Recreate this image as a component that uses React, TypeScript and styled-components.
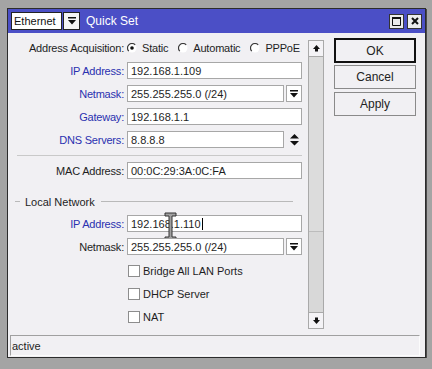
import * as React from 'react';
import styled, { createGlobalStyle, css } from 'styled-components';

const GlobalStyle = createGlobalStyle`
  html, body {
    margin: 0;
    padding: 0;
    background: #a4a4a4;
  }
  body {
    font-family: "Liberation Sans", Arial, sans-serif;
    font-size: 11px;
    color: #1e1e1e;
  }
`;

const Window = styled.div`
  box-sizing: border-box;
  width: 419px;
  height: 350px;
  margin: 8px 0 0 7px;
  border: 1px solid #2c2c2c;
  box-shadow: 1px 1px 0 #4a4a4a;
  background: #f1f0f3;
  display: flex;
  flex-direction: column;
`;

const TitleBar = styled.div`
  flex-shrink: 0;
  height: 24px;
  background: #4b4fc6;
  display: flex;
  align-items: center;
  padding: 0 3px 0 3px;
`;

const TitleSelect = styled.div`
  box-sizing: border-box;
  width: 51px;
  height: 18px;
  background: #fff;
  border: 1px solid #222;
  padding-left: 2px;
  line-height: 16px;
  color: #111;
`;

const TitleDrop = styled.div`
  box-sizing: border-box;
  width: 17px;
  height: 18px;
  margin-left: 1px;
  background: #f4f4f4;
  border: 1px solid #222;
  display: flex;
  align-items: center;
  justify-content: center;
`;

const TitleText = styled.div`
  margin-left: 6px;
  color: #fff;
  font-size: 12px;
  flex: 1;
`;

const WinButtons = styled.div`
  display: flex;
  gap: 3px;
`;

const WinButton = styled.div`
  box-sizing: border-box;
  width: 15px;
  height: 15px;
  background: #ececec;
  border: 1px solid #333;
  display: flex;
  align-items: center;
  justify-content: center;
`;

const Main = styled.div`
  display: flex;
  height: 300px;
  flex-shrink: 0;
`;

const LeftPane = styled.div`
  width: 300px;
  padding-top: 6px;
  box-sizing: border-box;
`;

const Form = styled.div`
  display: flex;
  flex-direction: column;
  gap: 6px;
`;

const Row = styled.div<{ $mt?: number }>`
  display: grid;
  grid-template-columns: 116px 175px;
  column-gap: 3px;
  align-items: center;
  height: 17px;
  margin-top: ${({ $mt }) => $mt ?? 0}px;
`;

const Label = styled.div<{ $blue?: boolean }>`
  text-align: right;
  white-space: nowrap;
  letter-spacing: -0.2px;
  color: ${({ $blue }) => ($blue ? '#2a31b0' : '#1e1e1e')};
`;

const Field = styled.div`
  display: flex;
  gap: 2px;
  height: 17px;
`;

const Input = styled.div`
  position: relative;
  box-sizing: border-box;
  flex: 1;
  height: 17px;
  border: 1px solid #a7a7a7;
  background: #fff;
  padding-left: 3px;
  display: flex;
  align-items: center;
  white-space: nowrap;
`;

const SideButton = styled.div<{ $plain?: boolean }>`
  box-sizing: border-box;
  width: 16px;
  height: 17px;
  display: flex;
  align-items: center;
  justify-content: center;
  ${({ $plain }) => !$plain && css`
    border: 1px solid #a7a7a7;
    background: #fff;
  `}
`;

const Caret = styled.span`
  display: inline-block;
  width: 1px;
  height: 12px;
  background: #000;
  margin-left: 1px;
`;

const IBeam = styled.svg`
  position: absolute;
  left: 36px;
  top: -4px;
`;

const Separator = styled.div`
  height: 1px;
  width: 285px;
  margin: 1px 0 0 9px;
  background: #c9c9c9;
`;

const GroupHeader = styled.div`
  display: flex;
  align-items: center;
  height: 15px;
  width: 285px;
  margin-top: 9px;
  &::before, &::after {
    content: '';
    height: 1px;
    background: #b9b9b9;
  }
  &::before {
    width: 5px;
    margin: 0 5px 0 7px;
  }
  &::after {
    flex: 1;
    margin-left: 6px;
  }
`;

const Radios = styled.div`
  display: flex;
  gap: 10px;
`;

const RadioItem = styled.div`
  display: flex;
  align-items: center;
  gap: 5px;
  white-space: nowrap;
  letter-spacing: -0.2px;
`;

const CheckItem = styled.div`
  display: flex;
  align-items: center;
  gap: 3px;
  padding-left: 1px;
`;

const CheckBox = styled.div`
  box-sizing: border-box;
  width: 12px;
  height: 12px;
  border: 1px solid #8d8d8d;
  background: #fff;
`;

const ScrollBar = styled.div`
  box-sizing: border-box;
  width: 16px;
  height: 289px;
  margin-top: 7px;
  border: 1px solid #a9a9a9;
  background: #d8d8d8;
  display: flex;
  flex-direction: column;
`;

const ScrollButton = styled.div<{ $down?: boolean }>`
  height: 15px;
  background: #f4f3f6;
  display: flex;
  align-items: center;
  justify-content: center;
  ${({ $down }) => ($down ? css`border-top: 1px solid #a9a9a9;` : css`border-bottom: 1px solid #a9a9a9;`)}
`;

const Thumb = styled.div`
  height: 174px;
  background: #dcdcdc;
  border-bottom: 1px solid #bcbcbc;
`;

const Track = styled.div`
  flex: 1;
`;

const ButtonColumn = styled.div`
  flex: 1;
  padding: 5px 9px 0 10px;
  display: flex;
  flex-direction: column;
  gap: 2px;
`;

const DialogButton = styled.div<{ $default?: boolean; $mt?: number }>`
  box-sizing: border-box;
  height: ${({ $default }) => ($default ? 25 : 24)}px;
  border: ${({ $default }) => ($default ? '2px solid #111' : '1px solid #8a8a8a')};
  background: #f1f0f3;
  display: flex;
  align-items: center;
  justify-content: center;
  font-size: 12px;
  color: #222;
  margin-top: ${({ $mt }) => $mt ?? 0}px;
`;

const StatusBar = styled.div`
  box-sizing: border-box;
  height: 21px;
  margin: 2px 5px 0 2px;
  border-top: 1px solid #a0a0a0;
  border-left: 1px solid #a0a0a0;
  border-right: 1px solid #fbfbfb;
  border-bottom: 1px solid #fbfbfb;
  padding-left: 1px;
  display: flex;
  align-items: center;
`;

const DropIcon = () => (
  <svg width="8" height="8" viewBox="0 0 8 8">
    <path d="M0 0H8V1.5H0Z M0 3H8L4 7.5Z" fill="#111" />
  </svg>
);

const SpinIcon = () => (
  <svg width="9" height="12" viewBox="0 0 9 12">
    <path d="M4.5 0L9 4.5H0Z M0 7H9L4.5 11.5Z" fill="#111" />
  </svg>
);

const ArrowIcon = ({ down }: { down?: boolean }) => (
  <svg width="7" height="7" viewBox="0 0 7 7" style={down ? { transform: 'rotate(180deg)' } : undefined}>
    <path d="M3.5 0L7 4H5V6.5H2V4H0Z" fill="#111" />
  </svg>
);

const Radio = ({ checked }: { checked?: boolean }) => (
  <svg width="10" height="10" viewBox="0 0 10 10">
    <circle cx="5" cy="5" r="4.5" fill="#fff" />
    <path d="M1.8 8.2A4.5 4.5 0 0 1 8.2 1.8" stroke="#3a3a3a" strokeWidth="1.2" fill="none" />
    {checked && <circle cx="5" cy="5" r="1.8" fill="#111" />}
  </svg>
);

type FieldRowProps = {
  label: string,
  value: string,
  blue?: boolean,
  side?: 'drop' | 'spin',
  mt?: number,
  children?: React.ReactNode,
};

const FieldRow = ({ label, value, blue, side, mt, children }: FieldRowProps) => (
  <Row $mt={mt}>
    <Label $blue={blue}>{label}</Label>
    <Field>
      <Input>
        {value}
        {children}
      </Input>
      {side === 'drop' && <SideButton><DropIcon /></SideButton>}
      {side === 'spin' && <SideButton $plain><SpinIcon /></SideButton>}
    </Field>
  </Row>
);

const CheckRow = ({ label, mt }: { label: string, mt?: number }) => (
  <Row $mt={mt}>
    <span />
    <CheckItem>
      <CheckBox />
      {label}
    </CheckItem>
  </Row>
);

const App = () => (
  <>
    <GlobalStyle />
    <Window>
      <TitleBar>
        <TitleSelect>Ethernet</TitleSelect>
        <TitleDrop><DropIcon /></TitleDrop>
        <TitleText>Quick Set</TitleText>
        <WinButtons>
          <WinButton>
            <svg width="9" height="9" viewBox="0 0 9 9">
              <path d="M0.5 0.5H8.5V8.5H0.5Z" stroke="#111" fill="none" />
              <path d="M0 0H9V2H0Z" fill="#111" />
            </svg>
          </WinButton>
          <WinButton>
            <svg width="8" height="8" viewBox="0 0 8 8">
              <path d="M1 1L7 7M7 1L1 7" stroke="#111" strokeWidth="2" />
            </svg>
          </WinButton>
        </WinButtons>
      </TitleBar>
      <Main>
        <LeftPane>
          <Form>
            <Row>
              <Label>Address Acquisition:</Label>
              <Radios>
                <RadioItem><Radio checked />Static</RadioItem>
                <RadioItem><Radio />Automatic</RadioItem>
                <RadioItem><Radio />PPPoE</RadioItem>
              </Radios>
            </Row>
            <FieldRow label="IP Address:" value="192.168.1.109" blue />
            <FieldRow label="Netmask:" value="255.255.255.0 (/24)" blue side="drop" />
            <FieldRow label="Gateway:" value="192.168.1.1" blue />
            <FieldRow label="DNS Servers:" value="8.8.8.8" blue side="spin" />
            <Separator />
            <FieldRow label="MAC Address:" value="00:0C:29:3A:0C:FA" />
            <GroupHeader>Local Network</GroupHeader>
            <FieldRow label="IP Address:" value="192.168.1.110" blue>
              <Caret />
              <IBeam width="13" height="29" viewBox="0 0 13 29">
                <path d="M1 1H12V4H8V25H12V28H1V25H5V4H1Z" fill="#a0a0a0" stroke="#333" strokeWidth="1" />
              </IBeam>
            </FieldRow>
            <FieldRow label="Netmask:" value="255.255.255.0 (/24)" side="drop" />
            <CheckRow label="Bridge All LAN Ports" mt={1} />
            <CheckRow label="DHCP Server" />
            <CheckRow label="NAT" />
          </Form>
        </LeftPane>
        <ScrollBar>
          <ScrollButton><ArrowIcon /></ScrollButton>
          <Thumb />
          <Track />
          <ScrollButton $down><ArrowIcon down /></ScrollButton>
        </ScrollBar>
        <ButtonColumn>
          <DialogButton $default>OK</DialogButton>
          <DialogButton>Cancel</DialogButton>
          <DialogButton $mt={1}>Apply</DialogButton>
        </ButtonColumn>
      </Main>
      <StatusBar>active</StatusBar>
    </Window>
  </>
);

export default App;
